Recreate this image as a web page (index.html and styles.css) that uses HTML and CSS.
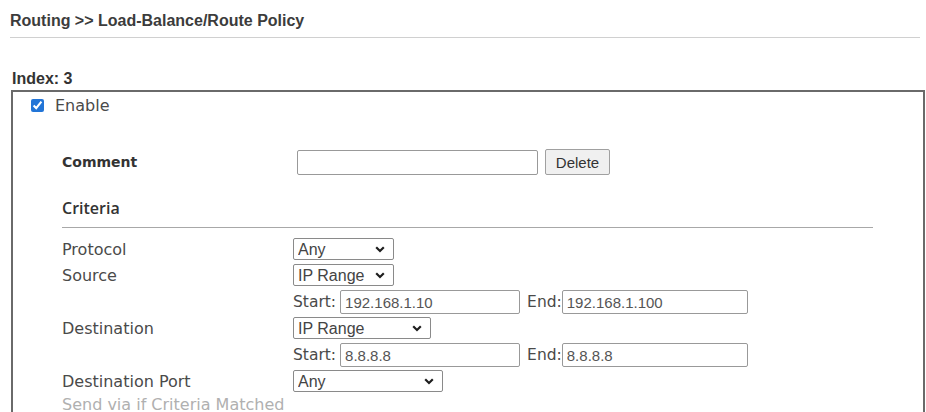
FILE: index.html
```html
<!DOCTYPE html>
<html lang="en">

<head>
    <meta charset="UTF-8">
    <meta name="viewport" content="width=device-width, initial-scale=1.0">
    <link rel="stylesheet" href="styles.css">
</head>

<body>
    <div class="page">
        <div class="title">Routing &gt;&gt; Load-Balance/Route Policy</div>

        <div class="index-label">Index: 3</div>

        <div class="panel">
            <label class="enable-row">
                <input type="checkbox" class="enable-box" checked>
                <span>Enable</span>
            </label>

            <div class="form">
                <div class="row comment-row">
                    <div class="label bold">Comment</div>
                    <div class="controls">
                        <input type="text" class="comment-input">
                        <button class="delete-btn">Delete</button>
                    </div>
                </div>

                <div class="section-title">Criteria</div>

                <div class="row sel-row first">
                    <div class="label">Protocol</div>
                    <div class="controls">
                        <span class="sel-wrap">
                            <select class="sel sel-sm">
                                <option>Any</option>
                            </select>
                            <svg class="chev" width="10" height="7" viewBox="0 0 10 7"><path d="M1.2 1.3 L5 5 L8.8 1.3" fill="none" stroke="#1e1e1e" stroke-width="2.2"/></svg>
                        </span>
                    </div>
                </div>

                <div class="row sel-row">
                    <div class="label">Source</div>
                    <div class="controls">
                        <span class="sel-wrap">
                            <select class="sel sel-sm">
                                <option>IP Range</option>
                            </select>
                            <svg class="chev" width="10" height="7" viewBox="0 0 10 7"><path d="M1.2 1.3 L5 5 L8.8 1.3" fill="none" stroke="#1e1e1e" stroke-width="2.2"/></svg>
                        </span>
                    </div>
                </div>

                <div class="row ip-row">
                    <div class="label"></div>
                    <div class="controls">
                        <span class="tag">Start:</span>
                        <input type="text" class="ip-input start" value="192.168.1.10">
                        <span class="tag end-tag">End:</span>
                        <input type="text" class="ip-input end" value="192.168.1.100">
                    </div>
                </div>

                <div class="row sel-row">
                    <div class="label">Destination</div>
                    <div class="controls">
                        <span class="sel-wrap">
                            <select class="sel sel-md">
                                <option>IP Range</option>
                            </select>
                            <svg class="chev" width="10" height="7" viewBox="0 0 10 7"><path d="M1.2 1.3 L5 5 L8.8 1.3" fill="none" stroke="#1e1e1e" stroke-width="2.2"/></svg>
                        </span>
                    </div>
                </div>

                <div class="row ip-row">
                    <div class="label"></div>
                    <div class="controls">
                        <span class="tag">Start:</span>
                        <input type="text" class="ip-input start" value="8.8.8.8">
                        <span class="tag end-tag">End:</span>
                        <input type="text" class="ip-input end" value="8.8.8.8">
                    </div>
                </div>

                <div class="row sel-row port-row">
                    <div class="label">Destination Port</div>
                    <div class="controls">
                        <span class="sel-wrap">
                            <select class="sel sel-lg">
                                <option>Any</option>
                            </select>
                            <svg class="chev" width="10" height="7" viewBox="0 0 10 7"><path d="M1.2 1.3 L5 5 L8.8 1.3" fill="none" stroke="#1e1e1e" stroke-width="2.2"/></svg>
                        </span>
                    </div>
                </div>

                <div class="send-via">Send via if Criteria Matched</div>
            </div>
        </div>
    </div>
</body>

</html>
```

FILE: styles.css
```css
body {
    margin: 0;
    background: #fff;
    font-family: "DejaVu Sans", Verdana, sans-serif;
    font-size: 16px;
    color: #4a4a4a;
    overflow: hidden;
}

.page {
    padding-left: 10px;
}

.title {
    font-family: "Liberation Sans", Arial, sans-serif;
    font-weight: bold;
    font-size: 16px;
    line-height: 18px;
    color: #3c3c3c;
    padding: 12px 0 7px;
    margin-right: 6px;
    border-bottom: 1px solid #d0d0d0;
}

.index-label {
    font-family: "Liberation Sans", Arial, sans-serif;
    font-weight: bold;
    font-size: 16px;
    line-height: 18px;
    color: #333;
    margin: 32px 0 2px 2px;
}

/* the outlined box */
.panel {
    margin: 0 1px 0 1px;
    border: 2px solid #6a6a6a;
    border-bottom: none;
    height: 330px;
}

.enable-row {
    display: flex;
    align-items: center;
    height: 20px;
    padding: 3px 0 0 18px;
}

.enable-box {
    width: 13px;
    height: 13px;
    margin: 0 11px 0 0;
    accent-color: #2275d7;
}

.form {
    padding-left: 49px;
}

.row {
    display: flex;
    align-items: center;
}

.label {
    width: 231px;
    flex-shrink: 0;
}

.label.bold {
    font-weight: bold;
    font-size: 14px;
    color: #333;
}

.controls {
    display: flex;
    align-items: center;
}

.comment-row {
    margin-top: 34px;
    height: 26px;
}

.comment-input {
    width: 241px;
    height: 25px;
    box-sizing: border-box;
    margin: 0 7px 0 4px;
    border: 1px solid #999;
    border-radius: 2px;
}

.delete-btn {
    width: 65px;
    height: 26px;
    font-family: "Liberation Sans", Arial, sans-serif;
    font-size: 15px;
    color: #333;
    background: #f0f0f0;
    border: 1px solid #a0a0a0;
    border-radius: 2px;
    padding: 0;
}

.section-title {
    font-family: "Open Sans", sans-serif;
    font-weight: 600;
    font-size: 16px;
    line-height: 22px;
    color: #333;
    margin: 22px 50px 0 0;
    padding-bottom: 8px;
    border-bottom: 1px solid #a8a8a8;
}

.sel-row {
    height: 22px;
    margin-top: 4px;
}

.sel-row.first {
    margin-top: 10px;
}

.port-row {
    margin-top: 8px;
}

.sel-wrap {
    position: relative;
    display: inline-block;
    height: 22px;
}

.sel {
    appearance: none;
    -webkit-appearance: none;
    display: block;
    height: 22px;
    font-family: "Liberation Sans", Arial, sans-serif;
    font-size: 16px;
    color: #444;
    background: #fff;
    border: 1px solid #8a8a8a;
    border-radius: 2px;
    padding: 0 4px;
}

.chev {
    position: absolute;
    right: 9px;
    top: 8px;
    pointer-events: none;
}

.sel-sm {
    width: 101px;
}

.sel-md {
    width: 138px;
}

.sel-lg {
    width: 150px;
}

.ip-row {
    height: 24px;
    margin-top: 4px;
}

.ip-row + .sel-row {
    margin-top: 3px;
}

.tag {
    font-size: 15.5px;
    color: #4a4a4a;
}

.end-tag {
    margin-left: 7px;
}

.ip-input {
    height: 24px;
    box-sizing: border-box;
    font-family: "Liberation Sans", Arial, sans-serif;
    font-size: 15px;
    color: #555;
    border: 1px solid #999;
    border-radius: 2px;
    padding: 0 4px;
}

.ip-input.start {
    width: 180px;
    margin-left: 4px;
}

.ip-input.end {
    width: 186px;
    margin-left: 0;
}

.send-via {
    margin-top: 3px;
    color: #b0b0b0;
    line-height: 20px;
}
```
